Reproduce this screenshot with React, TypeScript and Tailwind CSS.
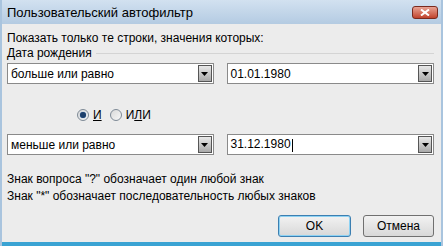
import { useState } from 'react';

function Arrow() {
  return (
    <div className="w-[14px] h-[17px] border border-[#555] bg-gradient-to-b from-[#e8e8e8] to-[#a9a9a9] flex items-center justify-center">
      <svg width="7" height="4" viewBox="0 0 7 4">
        <path d="M0 0 L7 0 L3.5 4 Z" fill="#000" />
      </svg>
    </div>
  );
}

function Combo({ value, width, caret }: { value: string; width: string; caret?: boolean }) {
  return (
    <div className={`${width} h-[21px] border border-[#8a8a8a] bg-white flex items-center pl-[3px] pr-[1px]`}>
      <span className="flex-1 text-[12px] text-black leading-[14px]">
        {value}
        {caret && <span className="inline-block w-px h-[13px] bg-black align-middle ml-px" />}
      </span>
      <Arrow />
    </div>
  );
}

function Radio({ checked, label }: { checked: boolean; label: React.ReactNode }) {
  return (
    <div className="flex items-center gap-[4px]">
      <div className="w-[12px] h-[12px] rounded-full border border-[#7e8a96] bg-gradient-to-br from-[#d9d9d9] to-[#f7f7f7] flex items-center justify-center">
        {checked && <div className="w-[6px] h-[6px] rounded-full bg-[#1d3f6b] shadow-[0_0_1px_#3d7bc4]" />}
      </div>
      <span className="text-[12px] leading-[14px] text-black">{label}</span>
    </div>
  );
}

export default function App() {
  const [mode] = useState('and');
  return (
    <div className="w-[443px] h-[246px] bg-[#ececec] flex flex-col border-l-2 border-r-2 border-[#a9c4de] overflow-hidden" style={{ fontFamily: '"Liberation Sans", Arial, sans-serif' }}>
      {/* Title */}
      <div className="h-[24px] shrink-0 bg-gradient-to-b from-[#d2e1f0] to-[#b4cbe2] flex items-center justify-between pl-[5px] pr-[3px]">
        <span className="text-[13px] leading-[15px] text-black">Пользовательский автофильтр</span>
        <div className="w-[26px] h-[13px] rounded-[3px] border border-[#7a2a1e] bg-gradient-to-b from-[#e8a293] to-[#c0422c] flex items-center justify-center">
          <svg width="10" height="7" viewBox="0 0 10 7">
            <path d="M1 0.5 L9 6.5 M9 0.5 L1 6.5" stroke="#fff" strokeWidth="2" />
          </svg>
        </div>
      </div>

      {/* Body */}
      <div className="flex-1 flex flex-col pl-[5px] pr-[7px]">
        <div className="mt-[7px] h-[14px] leading-[14px] text-[12px] text-black">Показать только те строки, значения которых:</div>
        <div className="mt-[1px] h-[14px] flex items-center gap-[4px] text-[12px] leading-[14px] text-black">
          <span>Дата рождения</span>
          <div className="flex-1 h-px bg-[#d4d4d4]" />
        </div>
        <div className="mt-[3px] flex items-center gap-[13px]">
          <Combo value="больше или равно" width="w-[207px]" />
          <Combo value="01.01.1980" width="w-[208px]" />
        </div>

        <div className="mt-[23px] h-[16px] flex items-center gap-[8px] pl-[70px]">
          <Radio checked={mode === 'and'} label={<span className="underline">И</span>} />
          <Radio checked={mode === 'or'} label={<span>И<span className="underline">Л</span>И</span>} />
        </div>

        <div className="mt-[11px] flex items-center gap-[13px]">
          <Combo value="меньше или равно" width="w-[207px]" />
          <Combo value="31.12.1980" width="w-[208px]" caret />
        </div>

        <div className="mt-[16px] text-[12px] text-black leading-[17px]">
          <div>Знак вопроса "?" обозначает один любой знак</div>
          <div>Знак "*" обозначает последовательность любых знаков</div>
        </div>

        <div className="mt-auto mb-[5px] flex justify-end gap-[12px]">
          <button className="w-[73px] h-[22px] rounded-[3px] border border-[#3c7fb1] bg-gradient-to-b from-[#f2f2f2] to-[#d8d8d8] text-[12px] text-black shadow-[inset_0_0_0_1px_#8ed2f3]">OK</button>
          <button className="w-[71px] h-[22px] rounded-[3px] border border-[#707070] bg-gradient-to-b from-[#f2f2f2] to-[#d8d8d8] text-[12px] text-black">Отмена</button>
        </div>
      </div>
      <div className="h-[4px] shrink-0 bg-[#3aa3d3]" />
    </div>
  );
}
